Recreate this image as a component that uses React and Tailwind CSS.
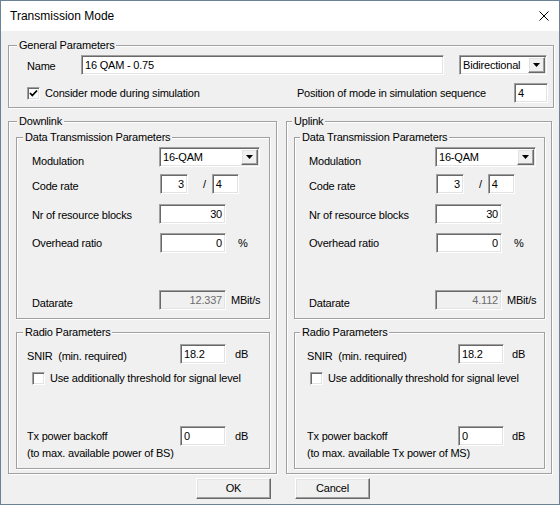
import React from "react";

const sunken =
  "border border-t-[#a0a0a0] border-l-[#a0a0a0] border-r-white border-b-white shadow-[inset_1px_1px_0_#696969,inset_-1px_-1px_0_#e3e3e3]";
const raised =
  "border border-t-white border-l-white border-r-[#696969] border-b-[#696969] shadow-[inset_-1px_-1px_0_#a0a0a0,inset_1px_1px_0_#e3e3e3]";

function Group({ legend, legendCls, className = "", children }) {
  return (
    <fieldset
      className={`border border-[#a0a0a0] shadow-[1px_1px_0_#fff,inset_1px_1px_0_#fff] min-w-0 ${className}`}
    >
      <legend className={`${legendCls} px-[2px] bg-[#f0f0f0]`}>{legend}</legend>
      {children}
    </fieldset>
  );
}

function Field({ value, className = "", right = false, disabled = false }) {
  return (
    <div
      className={`h-[20px] flex items-center px-[3px] ${sunken} ${
        disabled ? "bg-[#f0f0f0] text-[#6d6d6d]" : "bg-white"
      } ${right ? "justify-end" : ""} ${className}`}
    >
      {value}
    </div>
  );
}

function Combo({ value, className = "" }) {
  return (
    <div className={`h-[20px] flex items-center bg-white pl-[3px] pr-[1px] ${sunken} ${className}`}>
      <span className="flex-1">{value}</span>
      <div className={`w-[17px] h-[16px] flex items-center justify-center bg-[#f0f0f0] ${raised}`}>
        <svg width="7" height="4" viewBox="0 0 7 4">
          <path d="M0 0h7L3.5 4z" fill="#000" />
        </svg>
      </div>
    </div>
  );
}

function Check({ checked }) {
  return (
    <div className={`w-[13px] h-[13px] shrink-0 bg-white flex items-center justify-center ${sunken}`}>
      {checked && (
        <svg width="9" height="9" viewBox="0 0 9 9">
          <polyline points="1,4 3.3,6.5 8,1.5" fill="none" stroke="#000" strokeWidth="1.8" />
        </svg>
      )}
    </div>
  );
}

function Button({ children }) {
  return (
    <div className={`w-[75px] h-[21px] flex items-center justify-center bg-[#f0f0f0] ${raised}`}>
      {children}
    </div>
  );
}

const sides = [
  {
    title: "Downlink",
    outerLeg: "ml-[8px]",
    outerW: "w-[270px]",
    innerW: "w-[254px]",
    innerLeg: "ml-[6px]",
    dl: "pl-[15px]",
    dlw: "w-[127px]",
    rl: "pl-[10px]",
    rlw: "w-[153px]",
    unit: "ml-[9px]",
    rate: "12.337",
    note: "(to max. available power of BS)",
  },
  {
    title: "Uplink",
    outerLeg: "ml-[5px]",
    outerW: "w-[267px]",
    innerW: "w-[251px]",
    innerLeg: "ml-[5px]",
    dl: "pl-[14px]",
    dlw: "w-[126px]",
    rl: "pl-[12px]",
    rlw: "w-[151px]",
    unit: "ml-[8px]",
    rate: "4.112",
    note: "(to max. available Tx power of MS)",
  },
];

function Side({ s }) {
  return (
    <Group legend={s.title} legendCls={s.outerLeg} className={`${s.outerW} pb-[4px]`}>
      {/* Data transmission */}
      <Group legend="Data Transmission Parameters" legendCls={s.innerLeg} className={`${s.innerW} ml-[7px] mt-[3px]`}>
        <div className={`flex flex-col ${s.dl} pb-[8px]`}>
          <div className="flex items-center h-[20px] mt-[3px]">
            <span className={`${s.dlw} pt-[8px]`}>Modulation</span>
            <Combo value="16-QAM" className="w-[101px]" />
          </div>
          <div className="flex items-center h-[20px] mt-[7px]">
            <span className={`${s.dlw} pt-[5px]`}>Code rate</span>
            <Field value="3" right className="w-[28px] ml-[1px]" />
            <span className="pl-[15px] pr-[6px]">/</span>
            <Field value="4" className="w-[27px]" />
          </div>
          <div className="flex items-center h-[20px] mt-[10px]">
            <span className={`${s.dlw} pt-[3px]`}>Nr of resource blocks</span>
            <Field value="30" right className="w-[67px]" />
          </div>
          <div className="flex items-center h-[20px] mt-[9px]">
            <span className={s.dlw}>Overhead ratio</span>
            <Field value="0" right className="w-[66px] ml-[1px]" />
            <span className="ml-[12px]">%</span>
          </div>
          <div className="flex items-center h-[20px] mt-[37px]">
            <span className={`${s.dlw} pt-[6px]`}>Datarate</span>
            <Field value={s.rate} right disabled className="w-[67px]" />
            <span className="ml-[5px]">MBit/s</span>
          </div>
        </div>
      </Group>

      {/* Radio */}
      <Group legend="Radio Parameters" legendCls={s.innerLeg} className={`${s.innerW} ml-[7px] mt-[7px]`}>
        <div className="flex flex-col pb-[8px]">
          <div className={`flex items-center h-[20px] mt-[5px] ${s.rl}`}>
            <span className={`${s.rlw} pt-[5px]`}>SNIR&nbsp; (min. required)</span>
            <Field value="18.2" className="w-[46px]" />
            <span className={s.unit}>dB</span>
          </div>
          <div className="flex items-center h-[13px] mt-[8px] pl-[15px] gap-[5px]">
            <Check />
            <span>Use additionally threshold for signal level</span>
          </div>
          <div className={`flex items-center h-[20px] mt-[41px] ${s.rl}`}>
            <span className={s.rlw}>Tx power backoff</span>
            <Field value="0" className="w-[46px]" />
            <span className={s.unit}>dB</span>
          </div>
          <div className={`h-[13px] mt-[1px] ${s.rl}`}>{s.note}</div>
        </div>
      </Group>
    </Group>
  );
}

export default function App() {
  return (
    <div className="w-[560px] h-[505px] border border-[#6b8299] bg-[#f0f0f0] flex flex-col font-['Liberation_Sans',Arial,sans-serif] text-[11px] leading-[13px] tracking-[-0.2px] text-black">
      <div className="h-[30px] bg-white flex items-center pl-[9px] pr-[10px] text-[12px] tracking-normal">
        <span className="flex-1">Transmission Mode</span>
        <svg width="10" height="10" viewBox="0 0 10 10">
          <path d="M0.5 0.5L9.5 9.5M9.5 0.5L0.5 9.5" stroke="#000" strokeWidth="1" />
        </svg>
      </div>

      <div className="flex-1 flex flex-col px-[7px]">
        <Group legend="General Parameters" legendCls="ml-[8px]" className="w-[546px] mt-[8px]">
          <div className="flex flex-col pl-[18px] pr-[5px] pb-[4px]">
            <div className="flex items-center h-[20px] mt-[3px]">
              <span className="w-[54px] pt-[2px]">Name</span>
              <Field value="16 QAM - 0.75" className="w-[363px]" />
              <Combo value="Bidirectional" className="w-[88px] ml-[15px]" />
            </div>
            <div className="flex items-center h-[20px] mt-[8px]">
              <Check checked />
              <span className="ml-[5px]">Consider mode during simulation</span>
              <span className="ml-auto">Position of mode in simulation sequence</span>
              <Field value="4" className="w-[34px] ml-[28px]" />
            </div>
          </div>
        </Group>

        <div className="flex gap-[9px] mt-[7px]">
          {sides.map((s) => (
            <Side key={s.title} s={s} />
          ))}
        </div>

        <div className="flex justify-center gap-[24px] pl-[6px] mt-[4px]">
          <Button>OK</Button>
          <Button>Cancel</Button>
        </div>
      </div>
    </div>
  );
}
